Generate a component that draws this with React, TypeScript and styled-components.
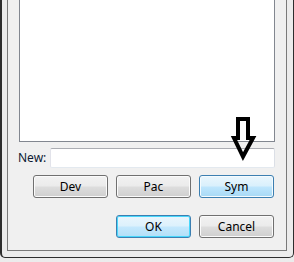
import React from 'react';
import styled, { createGlobalStyle, css } from 'styled-components';

const GlobalStyle = createGlobalStyle`
  html, body {
    margin: 0;
    padding: 0;
    background: #e6e6e6;
  }
  body {
    font-family: "Noto Sans", "Open Sans", Arial, sans-serif;
    font-size: 12px;
  }
`;

const Screen = styled.div`
  position: relative;
  width: 294px;
  height: 262px;
  overflow: hidden;
  background: linear-gradient(#cfcfcf, #ececec);
`;

const Frame = styled.div`
  box-sizing: border-box;
  width: 294px;
  height: 258px;
  border-left: 2px solid #2e2e2e;
  border-right: 1px solid #2e2e2e;
  border-bottom: 1px solid #2e2e2e;
  border-bottom-left-radius: 5px;
  border-bottom-right-radius: 5px;
  background: #ececec;
  padding: 0 6px 6px 5px;
`;

const Client = styled.div`
  box-sizing: border-box;
  height: 251px;
  border-left: 1px solid #7a7a7a;
  border-right: 1px solid #7a7a7a;
  border-bottom: 1px solid #7a7a7a;
  background: #f0f0f0;
  padding: 0 11px 0 10px;
  display: flex;
  flex-direction: column;
`;

const ListBox = styled.div`
  box-sizing: border-box;
  height: 142px;
  margin-left: 1px;
  background: #fff;
  border: 1px solid #828790;
  border-top: none;
`;

const NewRow = styled.div`
  display: flex;
  align-items: center;
  margin-top: 6px;
  height: 20px;
`;

const Label = styled.label`
  width: 32px;
  color: #0c1a33;
  line-height: 20px;
`;

const TextInput = styled.input`
  box-sizing: border-box;
  flex: 1;
  height: 20px;
  margin: 0;
  padding: 0 3px;
  border: 1px solid #e3e9ef;
  border-top-color: #abadb3;
  border-left-color: #e2e3ea;
  border-right-color: #dbdfe6;
  border-radius: 2px;
  background: #fff;
  outline: none;
  font: inherit;
`;

const ButtonRow = styled.div<{ $top: number }>`
  display: flex;
  justify-content: flex-end;
  gap: 8px;
  margin-top: ${(p) => p.$top}px;
  padding-right: 1px;
`;

const Button = styled.button<{ $tone?: 'normal' | 'hover' | 'default' }>`
  box-sizing: border-box;
  width: 75px;
  height: 23px;
  margin: 0;
  padding: 0;
  border-radius: 3px;
  font: inherit;
  color: #000;
  border: 1px solid #707070;
  box-shadow: inset 0 0 0 1px #fbfbfb;
  background: linear-gradient(#f2f2f2 0%, #ebebeb 48%, #dddddd 52%, #cfcfcf 100%);

  ${(p) =>
    p.$tone === 'hover' &&
    css`
      border-color: #3c7fb1;
      box-shadow: inset 0 0 0 1px #f4fbfe;
      background: linear-gradient(#eaf6fd 0%, #d9f0fc 48%, #bee6fd 52%, #a7d9f5 100%);
    `}

  ${(p) =>
    p.$tone === 'default' &&
    css`
      border-color: #3c7fb1;
      box-shadow: inset 0 0 0 1px #48d7fb;
      background: linear-gradient(#eaf6fd 0%, #dcf1fc 48%, #c4e8fd 52%, #b2dff7 100%);
    `}
`;

const Arrow = styled.svg`
  position: absolute;
  left: 231px;
  top: 116px;
  width: 26px;
  height: 46px;
  overflow: visible;
`;

export default function App() {
  return (
    <>
      <GlobalStyle />
      <Screen>
        <Frame>
          <Client>
            <ListBox />
            <NewRow>
              <Label htmlFor="new-name">New:</Label>
              <TextInput id="new-name" />
            </NewRow>
            <ButtonRow $top={7}>
              <Button>Dev</Button>
              <Button>Pac</Button>
              <Button $tone="hover">Sym</Button>
            </ButtonRow>
            <ButtonRow $top={17}>
              <Button $tone="default">OK</Button>
              <Button>Cancel</Button>
            </ButtonRow>
          </Client>
        </Frame>
        <Arrow viewBox="0 0 26 46">
          <path
            d="M7 3 H17 V22 H22 L12 40.5 L3 22 H7 Z"
            fill="none"
            stroke="#000"
            strokeWidth="4"
            strokeLinejoin="miter"
            strokeMiterlimit="6"
          />
        </Arrow>
      </Screen>
    </>
  );
}
